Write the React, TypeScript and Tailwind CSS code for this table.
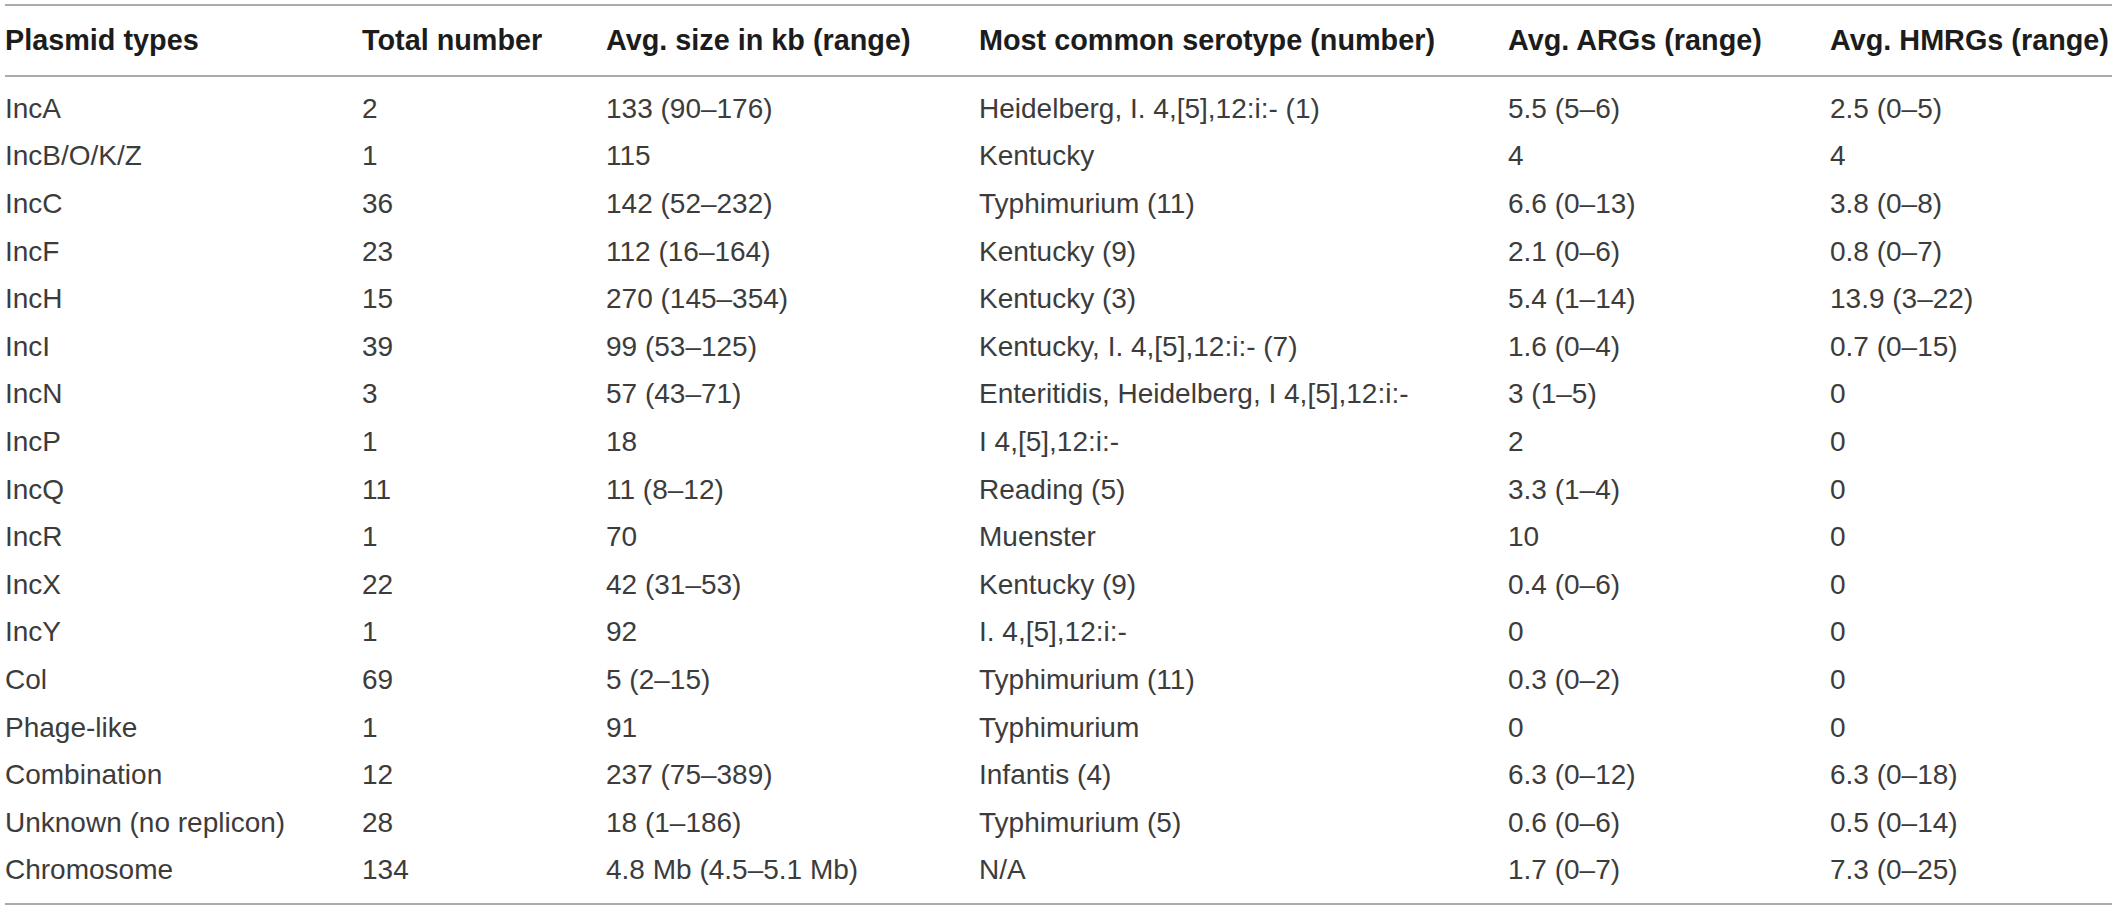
const headers = [
  "Plasmid types",
  "Total number",
  "Avg. size in kb (range)",
  "Most common serotype (number)",
  "Avg. ARGs (range)",
  "Avg. HMRGs (range)",
];

const rows: string[][] = [
  ["IncA", "2", "133 (90–176)", "Heidelberg, I. 4,[5],12:i:- (1)", "5.5 (5–6)", "2.5 (0–5)"],
  ["IncB/O/K/Z", "1", "115", "Kentucky", "4", "4"],
  ["IncC", "36", "142 (52–232)", "Typhimurium (11)", "6.6 (0–13)", "3.8 (0–8)"],
  ["IncF", "23", "112 (16–164)", "Kentucky (9)", "2.1 (0–6)", "0.8 (0–7)"],
  ["IncH", "15", "270 (145–354)", "Kentucky (3)", "5.4 (1–14)", "13.9 (3–22)"],
  ["IncI", "39", "99 (53–125)", "Kentucky, I. 4,[5],12:i:- (7)", "1.6 (0–4)", "0.7 (0–15)"],
  ["IncN", "3", "57 (43–71)", "Enteritidis, Heidelberg, I 4,[5],12:i:-", "3 (1–5)", "0"],
  ["IncP", "1", "18", "I 4,[5],12:i:-", "2", "0"],
  ["IncQ", "11", "11 (8–12)", "Reading (5)", "3.3 (1–4)", "0"],
  ["IncR", "1", "70", "Muenster", "10", "0"],
  ["IncX", "22", "42 (31–53)", "Kentucky (9)", "0.4 (0–6)", "0"],
  ["IncY", "1", "92", "I. 4,[5],12:i:-", "0", "0"],
  ["Col", "69", "5 (2–15)", "Typhimurium (11)", "0.3 (0–2)", "0"],
  ["Phage-like", "1", "91", "Typhimurium", "0", "0"],
  ["Combination", "12", "237 (75–389)", "Infantis (4)", "6.3 (0–12)", "6.3 (0–18)"],
  ["Unknown (no replicon)", "28", "18 (1–186)", "Typhimurium (5)", "0.6 (0–6)", "0.5 (0–14)"],
  ["Chromosome", "134", "4.8 Mb (4.5–5.1 Mb)", "N/A", "1.7 (0–7)", "7.3 (0–25)"],
];

// column starts measured off the reference: 5, 362, 606, 979, 1508, 1830
const cols = "grid grid-cols-[357px_244px_373px_529px_322px_1fr]";

export default function App() {
  return (
    <div className="bg-white w-[2117px] h-[911px] pt-[4px] px-[5px] font-['Liberation_Sans',Arial,sans-serif]">
      <div className="border-t-2 border-b-2 border-[#ababab]">
        <div className={`${cols} h-[71px] items-center border-b-2 border-[#ababab] text-[28.8px] font-bold text-[#1c1c1c]`}>
          {headers.map((h) => (
            <div key={h} className="whitespace-nowrap">{h}</div>
          ))}
        </div>
        <div className="pt-[8px] pb-[9px]">
          {rows.map((r, i) => (
            <div key={i} className={`${cols} h-[47.6px] items-center text-[28px] text-[#3c3c3c]`}>
              {r.map((c, j) => (
                <div key={j} className="whitespace-nowrap">{c}</div>
              ))}
            </div>
          ))}
        </div>
      </div>
    </div>
  );
}
